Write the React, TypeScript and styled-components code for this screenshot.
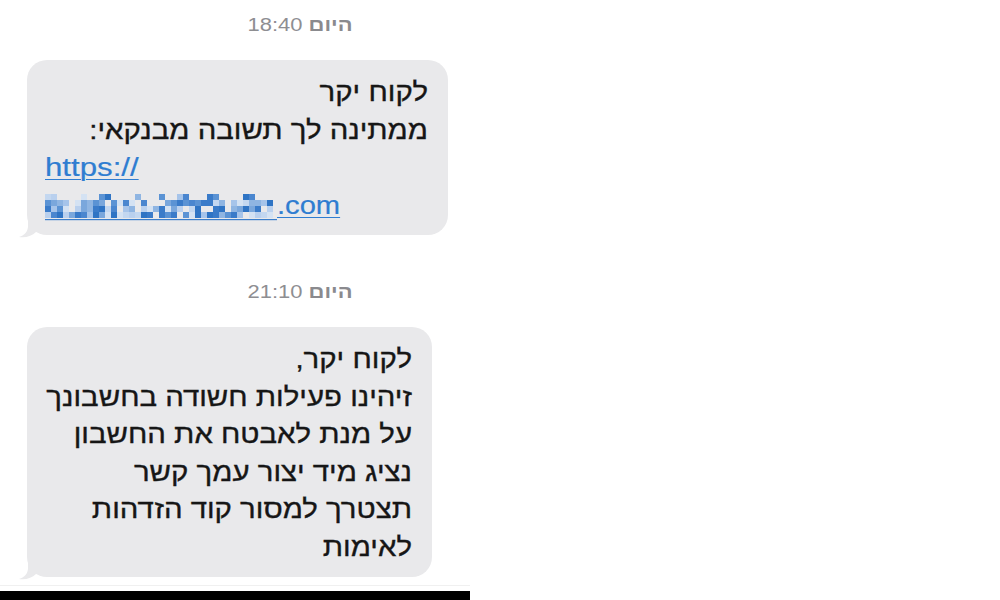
import React from "react";
import styled, { createGlobalStyle } from "styled-components";

const Global = createGlobalStyle`
  html, body { margin: 0; padding: 0; background: #ffffff; }
  body { font-family: "Liberation Sans", Arial, sans-serif; }
`;

const Page = styled.div`
  width: 1000px;
  height: 600px;
  display: flex;
  background: #ffffff;
`;

const Screen = styled.div`
  width: 470px;
  height: 600px;
  display: flex;
  flex-direction: column;
  background: #ffffff;
`;

const Thread = styled.div`
  flex: 1;
  display: flex;
  flex-direction: column;
  align-items: flex-start;
  padding: 15px 0 0 27px;
`;

const Stamp = styled.div<{ $top: number }>`
  align-self: stretch;
  margin-top: ${(p) => p.$top}px;
  margin-bottom: 25px;
  padding-left: 103px;
  text-align: center;
  font-size: 18px;
  line-height: 20px;
  color: #8e8e92;
`;

const StampText = styled.span`
  display: inline-block;
  direction: rtl;
  transform: scaleX(1.22);
  transform-origin: center;
  b { font-weight: 700; color: #8a8a8e; }
`;

const Bubble = styled.div<{ $width: number }>`
  position: relative;
  width: ${(p) => p.$width}px;
  box-sizing: border-box;
  padding: 14px 20px 11px 18px;
  background: #e9e9eb;
  border-radius: 20px;
  color: #161616;
  font-size: 26px;
  line-height: 37.5px;
  -webkit-text-stroke: 0.35px #161616;
`;

const Tail = styled.svg`
  position: absolute;
  left: -9px;
  bottom: -3px;
  width: 26px;
  height: 22px;
`;

const Line = styled.div`
  direction: rtl;
  text-align: right;
  white-space: nowrap;
  transform: scaleX(1.13);
  transform-origin: right center;
`;

const LinkLine = styled.div`
  direction: ltr;
  text-align: left;
  white-space: nowrap;
  display: flex;
  align-items: baseline;
`;

const Link = styled.span<{ $stretch: number }>`
  display: inline-block;
  color: #2f7dd1;
  -webkit-text-stroke: 0.2px #2f7dd1;
  text-decoration: underline;
  text-decoration-thickness: 1px;
  text-underline-offset: 3px;
  transform: scaleX(${(p) => p.$stretch});
  transform-origin: left center;
`;

const Mosaic = styled.svg`
  width: 232px;
  height: 28px;
  align-self: center;
  margin-top: 4px;
  flex-shrink: 0;
`;

const Footer = styled.div`
  height: 15px;
  display: flex;
  flex-direction: column;
  justify-content: flex-end;
  border-top: 1px solid #f0f0f0;
  box-sizing: border-box;
`;

const Bar = styled.div`
  height: 9px;
  background: #000000;
`;

const BubbleTail = () => (
  <Tail viewBox="0 0 26 22">
    <path d="M10 0 L10 10 C10 15 7 19 1 21 C8 22 14 20 18 16 L26 12 L26 0 Z" fill="#e9e9eb" />
  </Tail>
);

const shades = ["#2f74c4", "#5b93d4", "#8fb5e2", "#b9d0ee", "#4a86cf", "#a6c4ea", "#d4e2f3", "#3a7bc9", "#7aa7dc", "#c3d7f0"];

const MosaicArt = () => {
  const cells: React.ReactElement[] = [];
  let seed = 11;
  const rnd = () => {
    seed = (seed * 9301 + 49297) % 233280;
    return seed / 233280;
  };
  const tall = [0, 1, 5, 6, 9, 10, 14, 15, 22, 23, 27, 28, 33];
  for (let c = 0; c < 38; c++) {
    const isTall = tall.includes(c);
    for (let r = 0; r < 4; r++) {
      if (r === 0 && !isTall && rnd() > 0.2) continue;
      if (rnd() < 0.15) continue;
      const col = shades[Math.floor(rnd() * shades.length)];
      cells.push(<rect key={`${c}-${r}`} x={c * 6} y={r * 6 + 1} width={6} height={6} fill={col} />);
    }
  }
  return (
    <Mosaic viewBox="0 0 232 28">
      {cells}
      <rect x="0" y="26" width="232" height="1.2" fill="#3b7ecb" />
    </Mosaic>
  );
};

export default function App() {
  return (
    <>
      <Global />
      <Page>
        <Screen>
          <Thread>
            <Stamp $top={0}>
              <StampText>
                <b>היום</b> 18:40
              </StampText>
            </Stamp>
            <Bubble $width={421}>
              <Line>לקוח יקר</Line>
              <Line>ממתינה לך תשובה מבנקאי:</Line>
              <LinkLine>
                <Link $stretch={1.2}>https://</Link>
              </LinkLine>
              <LinkLine>
                <MosaicArt />
                <Link $stretch={1.12}>.com</Link>
              </LinkLine>
              <BubbleTail />
            </Bubble>
            <Stamp $top={47}>
              <StampText>
                <b>היום</b> 21:10
              </StampText>
            </Stamp>
            <Bubble $width={405}>
              <Line>לקוח יקר,</Line>
              <Line>זיהינו פעילות חשודה בחשבונך</Line>
              <Line>על מנת לאבטח את החשבון</Line>
              <Line>נציג מיד יצור עמך קשר</Line>
              <Line>תצטרך למסור קוד הזדהות</Line>
              <Line>לאימות</Line>
              <BubbleTail />
            </Bubble>
          </Thread>
          <Footer>
            <Bar />
          </Footer>
        </Screen>
      </Page>
    </>
  );
}
